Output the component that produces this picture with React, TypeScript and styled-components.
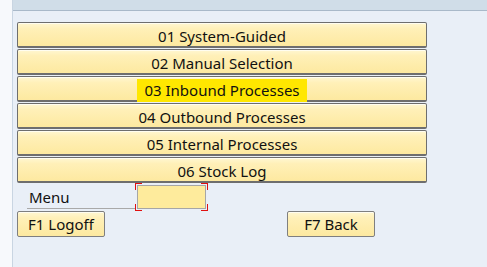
import React from "react";
import styled, { createGlobalStyle } from "styled-components";

const GlobalStyle = createGlobalStyle`
  html, body {
    margin: 0;
    padding: 0;
    background: #e9eff7;
  }
  body {
    font-family: "Noto Sans", Tahoma, sans-serif;
  }
`;

const menuItems = [
  { label: "01 System-Guided" },
  { label: "02 Manual Selection" },
  { label: "03 Inbound Processes", marked: true },
  { label: "04 Outbound Processes" },
  { label: "05 Internal Processes" },
  { label: "06 Stock Log" },
];

const App: React.FC = () => {
  return (
    <>
      <GlobalStyle />
      <Screen>
        <SideStrip />
        <Main>
          <TopBar />
          <Content>
            <MenuList>
              {menuItems.map((item) => (
                <MenuButton key={item.label}>
                  <Label $marked={item.marked}>{item.label}</Label>
                </MenuButton>
              ))}
            </MenuList>
            <InputRow>
              <FieldLabel>Menu</FieldLabel>
              <FieldWrap>
                <Field />
                <Corner $pos="tl" />
                <Corner $pos="tr" />
                <Corner $pos="bl" />
                <Corner $pos="br" />
              </FieldWrap>
            </InputRow>
            <KeyRow>
              <KeyButton>F1 Logoff</KeyButton>
              <KeyButton>F7 Back</KeyButton>
            </KeyRow>
          </Content>
        </Main>
      </Screen>
    </>
  );
};

const Screen = styled.div`
  display: flex;
  width: 487px;
  height: 267px;
  overflow: hidden;
`;

const SideStrip = styled.div`
  width: 12px;
  background: #f7f9fc;
  border-right: 1px solid #c9d5e2;
`;

const Main = styled.div`
  flex: 1;
  display: flex;
  flex-direction: column;
`;

const TopBar = styled.div`
  height: 10px;
  background: #d0dde8;
  border-bottom: 1px solid #a9b9c9;
`;

const Content = styled.div`
  padding: 11px 0 0 4px;
`;

const MenuList = styled.div`
  display: flex;
  flex-direction: column;
  gap: 1px;
  width: 410px;
`;

const buttonSkin = `
  box-sizing: border-box;
  background: linear-gradient(#fff7d2 0%, #fff0b8 25%, #fde9a0 100%);
  border: 1px solid #7f7f7f;
  border-radius: 2px;
  box-shadow: inset 0 1px 0 #fffdf0;
  color: #111;
  font-family: "Noto Sans", Tahoma, sans-serif;
  font-size: 15px;
`;

const MenuButton = styled.div`
  ${buttonSkin}
  height: 26px;
  padding-top: 3px;
  display: flex;
  align-items: center;
  justify-content: center;
  border-color: #6e6e6e;
  border-bottom-width: 2px;
`;

const Label = styled.span<{ $marked?: boolean }>`
  line-height: 23px;
  padding: 0 ${(p) => (p.$marked ? "7px" : "0")};
  background: ${(p) => (p.$marked ? "#ffe700" : "transparent")};
`;

const InputRow = styled.div`
  display: flex;
  align-items: flex-end;
  height: 26px;
  margin-left: 10px;
`;

const FieldLabel = styled.div`
  width: 108px;
  height: 24px;
  box-sizing: border-box;
  padding-left: 2px;
  font-size: 15px;
  line-height: 24px;
  color: #111;
  border-bottom: 1px solid #a9a9a9;
`;

const FieldWrap = styled.div`
  position: relative;
  padding: 2px;
  margin-bottom: -2px;
`;

const Field = styled.div`
  width: 69px;
  height: 24px;
  box-sizing: border-box;
  background: #feeb9c;
  border: 1px solid #a6a6a6;
`;

const Corner = styled.span<{ $pos: "tl" | "tr" | "bl" | "br" }>`
  position: absolute;
  z-index: 1;
  display: block;
  width: 6px;
  height: 6px;
  border-color: #e01010;
  border-style: solid;
  border-width: 0;
  ${(p) => (p.$pos[0] === "t" ? "top: 0; border-top-width: 1px;" : "bottom: 0; border-bottom-width: 1px;")}
  ${(p) => (p.$pos[1] === "l" ? "left: 0; border-left-width: 1px;" : "right: 0; border-right-width: 1px;")}
`;

const KeyRow = styled.div`
  display: flex;
  gap: 182px;
  margin-top: 2px;
`;

const KeyButton = styled.div`
  ${buttonSkin}
  width: 88px;
  height: 26px;
  display: flex;
  align-items: center;
  justify-content: center;
`;

export default App;
